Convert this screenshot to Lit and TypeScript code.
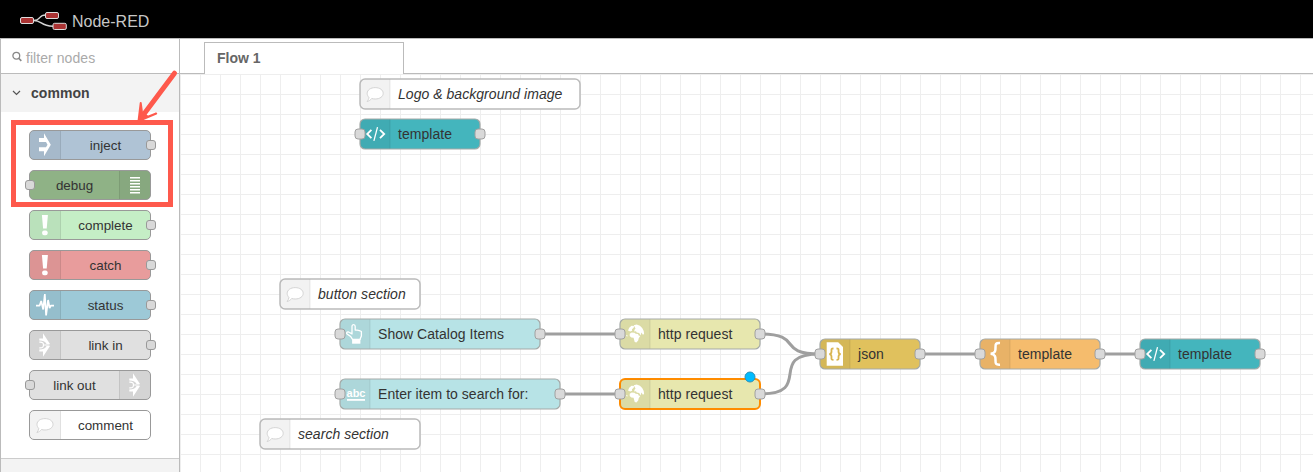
import { LitElement, html, svg, css, nothing } from "lit";
import { customElement } from "lit/decorators.js";

/* Icons are drawn in a 30 x 30 box. */
const icons: Record<string, unknown> = {
  inject: svg`<path fill="#fff" fill-rule="evenodd" d="M10 8h5V3.200l6.800 11.600L15 26.200v-4.900h-5v-4h7l1.500-2.600L17 12h-7z"/>`,
  debug: svg`<path fill="#fff" d="M11 7h10v1.500H11zM11 10h10v1.500H11zM11 13h10v1.500H11zM11 16h10v1.500H11zM11 19h10v1.500H11zM11 22h10v1.500H11z"/>`,
  alert: svg`<path fill="#fff" d="M12.900 5h6l-1.200 13.500h-3.600z"/><rect x="13.200" y="20.500" width="5.400" height="4.700" rx="1.800" fill="#fff"/>`,
  status: svg`<path fill="none" stroke="#fff" stroke-width="1.700" stroke-linejoin="bevel" d="M7 15.600h3.600l1.600-4.600 2 8.500L15.800 4l1.300 21.500 2-15.500 1.500 8 1.200-2.400H25"/>`,
  link: svg`<path fill="#fff" d="M10.300 8.500H14V3.200l7 10.800H17.600C16 11.300 14 10.700 10.300 10.500zM10.300 21.500H14v5.300l7-10.800H17.600c-1.600 2.700-3.600 3.300-7.300 3.500z"/><path fill="none" stroke="#fff" stroke-width="1.200" d="M10.300 12.200c3.700-.3 4.200 1.300 4.200 2.800s-.5 3.100-4.200 2.800M14.500 15h6"/>`,
  comment: svg`<path fill="#fff" stroke="#d4d4d4" d="M16 8.600c4.700 0 8 2.500 8 5.700s-3.300 5.700-8 5.700c-1.300 0-2.500-.2-3.500-.5-1.200 1.600-2.600 2.500-4.600 3 1-1.200 1.700-2.500 1.800-4.200-1.100-1-1.700-2.400-1.700-4 0-3.200 3.300-5.700 8-5.700z"/>`,
  code: svg`<path fill="none" stroke="#fff" stroke-width="1.800" d="M12.200 10.900L8 15l4.200 4.100M20.800 10.900L25 15l-4.200 4.100"/><path stroke="#fff" stroke-width="1.300" d="M18.300 8.200l-3.600 13.600"/>`,
  hand: svg`<path fill="none" stroke="#fff" stroke-width="1.300" stroke-linejoin="round" d="M12.800 15.500V7.500c0-2.500 3.200-2.500 3.200 0V11l2 .2 2.200.5 2 .8V17l-1.200 2.800v.6h-7.600c-1-2.400-3-4-5.300-5.200-1.500-1-.4-2.600 1.200-2.200l3.500 1.900"/><path fill="#fff" d="M12.900 20.500h8.300v4.200h-8.300z"/>`,
  abc: svg`<text x="16.800" y="18" text-anchor="middle" font-size="11" font-weight="700" fill="#fff">abc</text><path fill="#fff" d="M7.800 20h18v1.800h-18z"/>`,
  globe: svg`<path fill="#fff" d="M8.800 11.500l1.200-2.700 2.300-2 2.500.2-.3 1.700-1.700 1.600.2 1.500-2 .8zM14.500 6.300l3-.8 3.200 1.300 2.300 2.200 1.500 3 .4 3-1.200.8-1.500-2.200-.8 2.800-1.400-2.300-2.500-.6-.7-1.300-1.800.3.300-1.800 1-1.200zM10.500 14.800l2-1.300 2.800.2 1.200 1 2.300.3.700 1.500 1.500.5-1.500 2.200-.5 2.300-1.800 2-1.700-.4-.8-3-.3-1.300-2.300-.4-1.600-1.500zM7 15.700l1.400.7-.2 1.100-.9-.3z"/>`,
  json: svg`<path fill="#fff" d="M7.500 3.300h11.500l4.800 4.700v18.700H7.500z"/><path fill="none" stroke="#d9b550" stroke-width="1.800" d="M14.300 9.500c-2.600 0-2 1.200-2 3s-.3 2.400-2.200 2.600c1.900.2 2.200.9 2.200 2.700s-.6 3 2 3M17.300 9.500c2.600 0 2 1.200 2 3s.3 2.400 2.200 2.600c-1.900.2-2.200.9-2.200 2.700s.6 3-2 3"/>`,
  brace: svg`<path fill="none" stroke="#fff" stroke-width="2.500" d="M20.800 4c-4.500-.3-4.500 1.200-4.500 4.200s.4 5.900-4.800 6.600c5.200.7 4.800 3.900 4.800 6.700s0 4.500 4.500 4.200"/>`,
};

interface PaletteItem { label: string; color: string; icon: string; port: "in" | "out" | ""; right?: boolean }

const palette: PaletteItem[] = [
  { label: "inject", color: "#afc3d5", icon: "inject", port: "out" },
  { label: "debug", color: "#8fb286", icon: "debug", port: "in", right: true },
  { label: "complete", color: "#c5eec6", icon: "alert", port: "out" },
  { label: "catch", color: "#e89c9c", icon: "alert", port: "out" },
  { label: "status", color: "#9dc9d7", icon: "status", port: "out" },
  { label: "link in", color: "#e0e0e0", icon: "link", port: "out" },
  { label: "link out", color: "#e0e0e0", icon: "link", port: "in", right: true },
  { label: "comment", color: "#ffffff", icon: "comment", port: "" },
];

interface FlowNode { x: number; y: number; w: number; label: string; color: string; icon: string; note?: boolean; selected?: boolean }

/* Positions are relative to the workspace canvas. */
const nodes: FlowNode[] = [
  { x: 180, y: 5, w: 220, label: "Logo & background image", color: "#fff", icon: "comment", note: true },
  { x: 180, y: 45, w: 120, label: "template", color: "#44b5bd", icon: "code" },
  { x: 100, y: 205, w: 140, label: "button section", color: "#fff", icon: "comment", note: true },
  { x: 160, y: 245, w: 200, label: "Show Catalog Items", color: "#b7e3e6", icon: "hand" },
  { x: 440, y: 245, w: 140, label: "http request", color: "#e7e7ae", icon: "globe" },
  { x: 160, y: 305, w: 220, label: "Enter item to search for:", color: "#b7e3e6", icon: "abc" },
  { x: 440, y: 305, w: 140, label: "http request", color: "#e7e7ae", icon: "globe", selected: true },
  { x: 640, y: 265, w: 100, label: "json", color: "#e0c15d", icon: "json" },
  { x: 800, y: 265, w: 120, label: "template", color: "#f5bc6d", icon: "brace" },
  { x: 960, y: 265, w: 120, label: "template", color: "#44b5bd", icon: "code" },
  { x: 80, y: 345, w: 160, label: "search section", color: "#fff", icon: "comment", note: true },
];

const wires = [
  "M360 260H440",
  "M380 320H440",
  "M580 260C625 260 595 280 640 280",
  "M580 320C635 320 585 280 640 280",
  "M740 280H800",
  "M920 280H960",
];

@customElement("palette-node")
class PaletteNode extends LitElement {
  static properties = { item: { attribute: false } };
  declare item: PaletteItem;
  static styles = css`
    :host { display: block; }
    .node { position: relative; display: flex; box-sizing: border-box; width: 122px; height: 30px; border: 1px solid #999; border-radius: 5px; }
    .node.right { flex-direction: row-reverse; }
    .icon { flex: none; box-sizing: border-box; width: 31px; height: 28px; background: rgba(0,0,0,.05); border-right: 1px solid rgba(0,0,0,.08); border-radius: 4px 0 0 4px; overflow: hidden; }
    .right .icon { border-right: 0; border-left: 1px solid rgba(0,0,0,.08); border-radius: 0 4px 4px 0; }
    .icon svg { display: block; margin: -1px 0 0 -1px; }
    .label { flex: 1; text-align: center; line-height: 29px; font-size: 13.400px; color: #333; white-space: nowrap; }
    .port { position: absolute; top: 9px; box-sizing: border-box; width: 10px; height: 10px; border: 1px solid #999; border-radius: 3px; background: #d9d9d9; }
    .out { right: -6px; }
    .in { left: -5px; }
  `;
  render() {
    const { label, color, icon, port, right } = this.item;
    return html`<div class="node ${right ? "right" : ""}" style="background:${color}">
      <div class="icon"><svg width="31" height="30" viewBox="0 0 31 30">${icons[icon]}</svg></div>
      <div class="label">${label}</div>
      ${port ? html`<div class="port ${port}"></div>` : nothing}
    </div>`;
  }
}

@customElement("app-root")
class AppRoot extends LitElement {
  static styles = css`
    :host { display: flex; flex-direction: column; position: relative; width: 1313px; height: 472px; overflow: hidden; background: #fff; font-family: "Liberation Sans", Arial, sans-serif; }
    header { flex: none; box-sizing: border-box; height: 39px; display: flex; align-items: flex-start; gap: 5px; padding: 10px 0 0 20px; background: #000; border-bottom: 1px solid #bbb; color: #c7c7c7; font-size: 16px; line-height: 24px; }
    header svg { display: block; }
    main { flex: 1; min-height: 0; display: flex; }
    aside { flex: none; box-sizing: border-box; width: 180px; display: flex; flex-direction: column; border-left: 1px solid #bbb; border-right: 1px solid #bbb; overflow: hidden; }
    .filter { flex: none; box-sizing: border-box; height: 35px; display: flex; align-items: center; gap: 4px; padding: 3px 0 0 11px; border-bottom: 1px solid #bbb; color: #aaa; font-size: 14px; letter-spacing: .06px; }
    .filter svg { margin-bottom: 2px; }
    .category { flex: none; height: 38px; display: flex; align-items: center; gap: 10px; padding-left: 11px; background: #f3f3f3; color: #444; font-size: 14px; font-weight: 700; letter-spacing: .06px; }
    .items { display: flex; flex-direction: column; gap: 10px; padding: 18px 0 18px 28px; }
    .next { flex: 1; background: #f3f3f3; border-top: 1px solid #ccc; }
    section { flex: 1; min-width: 0; display: flex; flex-direction: column; }
    .tabs { flex: none; height: 35px; display: flex; align-items: flex-end; }
    .tabs .gap { width: 24px; border-bottom: 1px solid #bbb; }
    .tabs .rest { flex: 1; border-bottom: 1px solid #bbb; }
    .tab { box-sizing: border-box; width: 200px; height: 32px; padding-left: 12px; line-height: 31px; border: 1px solid #bbb; border-bottom: 0; color: #666; font-size: 14px; font-weight: 700; }
    .canvas { display: block; flex: 1; min-height: 0; }
    .mark { position: absolute; left: 0; top: 0; pointer-events: none; }
    text { font-family: "Liberation Sans", Arial, sans-serif; }
    .name { letter-spacing: .04px; }
  `;

  private flowNode(n: FlowNode) {
    return svg`<g transform="translate(${n.x} ${n.y})">
      <rect width=${n.w} height="30" rx="5" fill=${n.color} stroke=${n.selected ? "#ff8c00" : n.note ? "#bbb" : "#a5aaa8"} stroke-width=${n.selected ? 2 : n.note ? 1.500 : 1.200}/>
      <path d="M5 .5H30v29H5a4.500 4.500 0 0 1-4.500-4.500V5A4.500 4.500 0 0 1 5 .5z" fill="#000" fill-opacity=".05"/>
      <path d="M30 .5v29" stroke="#000" stroke-opacity=".08"/>
      <g transform="translate(-.8 0)">${icons[n.icon]}</g>
      <text class="name" x="38" y="20" font-size="14" fill="#333" font-style=${n.note ? "italic" : "normal"}>${n.label}</text>
      ${n.note ? nothing : svg`<g fill="#d9d9d9" stroke="#a0a0a0"><rect x="-5" y="10" width="10" height="10" rx="3"/><rect x=${n.w - 5} y="10" width="10" height="10" rx="3"/></g>`}
      ${n.selected ? svg`<circle cx="130" cy="-2" r="5" fill="#00bcff" stroke="#2c8fb8"/>` : nothing}
    </g>`;
  }

  render() {
    return html`
      <header>
        <svg width="47" height="21" viewBox="0 0 47 21">
          <g fill="none" stroke="#d5d5d5" stroke-width="1.400"><path d="M13.500 10.500c8 0 4.500-5.500 12-5.500M13.500 10.500c9 0 6.500 5.500 19.500 5.800"/></g>
          <g fill="#aa3333" stroke="#ddd" stroke-width="1"><rect x=".5" y="7.500" width="13" height="6" rx="1.500"/><rect x="25.500" y="2.500" width="13" height="6" rx="1.500"/><rect x="33" y="13.300" width="13.300" height="6.200" rx="1.500"/></g>
        </svg>
        <span>Node-RED</span>
      </header>
      <main>
        <aside>
          <div class="filter">
            <svg width="10" height="12" viewBox="0 0 10 12"><circle cx="4.300" cy="4.700" r="3.400" fill="none" stroke="#888" stroke-width="1.300"/><path d="M6.700 7.200l2.600 2.700" stroke="#888" stroke-width="1.600"/></svg>
            <span>filter nodes</span>
          </div>
          <div class="category"><svg width="9" height="6" viewBox="0 0 9 6"><path d="M1 1l3.500 3.500L8 1" fill="none" stroke="#555" stroke-width="1.200"/></svg><span>common</span></div>
          <div class="items">${palette.map((item) => html`<palette-node .item=${item}></palette-node>`)}</div>
          <div class="next"></div>
        </aside>
        <section>
          <div class="tabs"><div class="gap"></div><div class="tab">Flow 1</div><div class="rest"></div></div>
          <svg class="canvas" width="1133" height="398" viewBox="0 0 1133 398">
            <defs><pattern id="grid" width="20" height="20" patternUnits="userSpaceOnUse"><path d="M0 0h20v1H1v19H0z" fill="#eee"/></pattern></defs>
            <rect width="1133" height="398" fill="url(#grid)"/>
            <g fill="none" stroke="#9f9f9f" stroke-width="3">${wires.map((d) => svg`<path d=${d}/>`)}</g>
            ${nodes.map((n) => this.flowNode(n))}
          </svg>
        </section>
      </main>
      <svg class="mark" width="190" height="215" viewBox="0 0 190 215">
        <rect x="13.500" y="122.500" width="157" height="82" fill="none" stroke="#fe594c" stroke-width="5"/>
        <path d="M174.500 73.200L144 114" stroke="#fe594c" stroke-width="5" stroke-linecap="round"/>
        <path d="M138.500 121l2.200-18 1.300 9.500 6 4.200 8.200-3.200z" fill="#fe594c" stroke="#fe594c" stroke-width="2" stroke-linejoin="round"/>
      </svg>
    `;
  }
}
